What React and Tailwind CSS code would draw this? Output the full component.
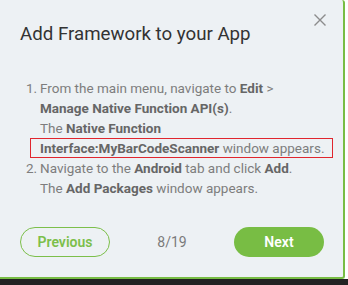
export default function App() {
  const font = { fontFamily: "Roboto, 'Liberation Sans', sans-serif" };
  return (
    <div className="w-[348px] h-[285px] bg-white flex flex-col overflow-hidden" style={font}>
      <div className="relative w-[345px] h-[279px] bg-[#edf1f4] border-r-2 border-b-2 border-[#78bd44] rounded-tr-[3px] rounded-br-[3px] pl-[20px] pr-[19px] pt-[22px]">
        <button className="absolute top-[14px] right-[17px] w-[12px] h-[12px] text-[#8c8c8c]">
          <svg viewBox="0 0 12 12" width="12" height="12" fill="none" stroke="currentColor" strokeWidth="1.4">
            <path d="M0.5 0.5 L11.5 11.5 M11.5 0.5 L0.5 11.5" />
          </svg>
        </button>
        <h2 className="text-[18.7px] leading-[24px] text-[#333]">Add Framework to your App</h2>

        <ol className="mt-[32px] text-[13.5px] leading-[20px] text-[#7d7d7d]">
          <li className="flex">
            <span className="w-[20px] pl-[6px] shrink-0">1.</span>
            <div>
              <div>
                From the main menu, navigate to <b className="text-[#666]">Edit</b> &gt;
              </div>
              <div>
                <b className="text-[#666]">Manage Native Function API(s)</b>.
              </div>
              <div>
                The <b className="text-[#666]">Native Function</b>
              </div>
              <div className="-ml-[10px] pl-[9px] w-[303px] h-[20px] border border-[#e0262e] leading-[18px]">
                <b className="text-[#666]">Interface:MyBarCodeScanner</b> window appears.
              </div>
            </div>
          </li>
          <li className="flex">
            <span className="w-[20px] pl-[6px] shrink-0">2.</span>
            <div>
              <div>
                Navigate to the <b className="text-[#666]">Android</b> tab and click <b className="text-[#666]">Add</b>.
              </div>
              <div>
                The <b className="text-[#666]">Add Packages</b> window appears.
              </div>
            </div>
          </li>
        </ol>

        <div className="mt-[29px] flex items-center justify-between">
          <button className="w-[90px] h-[30px] rounded-full border border-[#7cbf4a] text-[#7cbf4a] text-[14px] font-semibold">
            Previous
          </button>
          <span className="text-[14px] text-[#7a7a7a]">8/19</span>
          <button className="w-[90px] h-[30px] rounded-full bg-[#78bd44] text-white text-[14px] font-semibold">
            Next
          </button>
        </div>
      </div>
      <div className="flex-1 bg-[#222222]" />
    </div>
  );
}
